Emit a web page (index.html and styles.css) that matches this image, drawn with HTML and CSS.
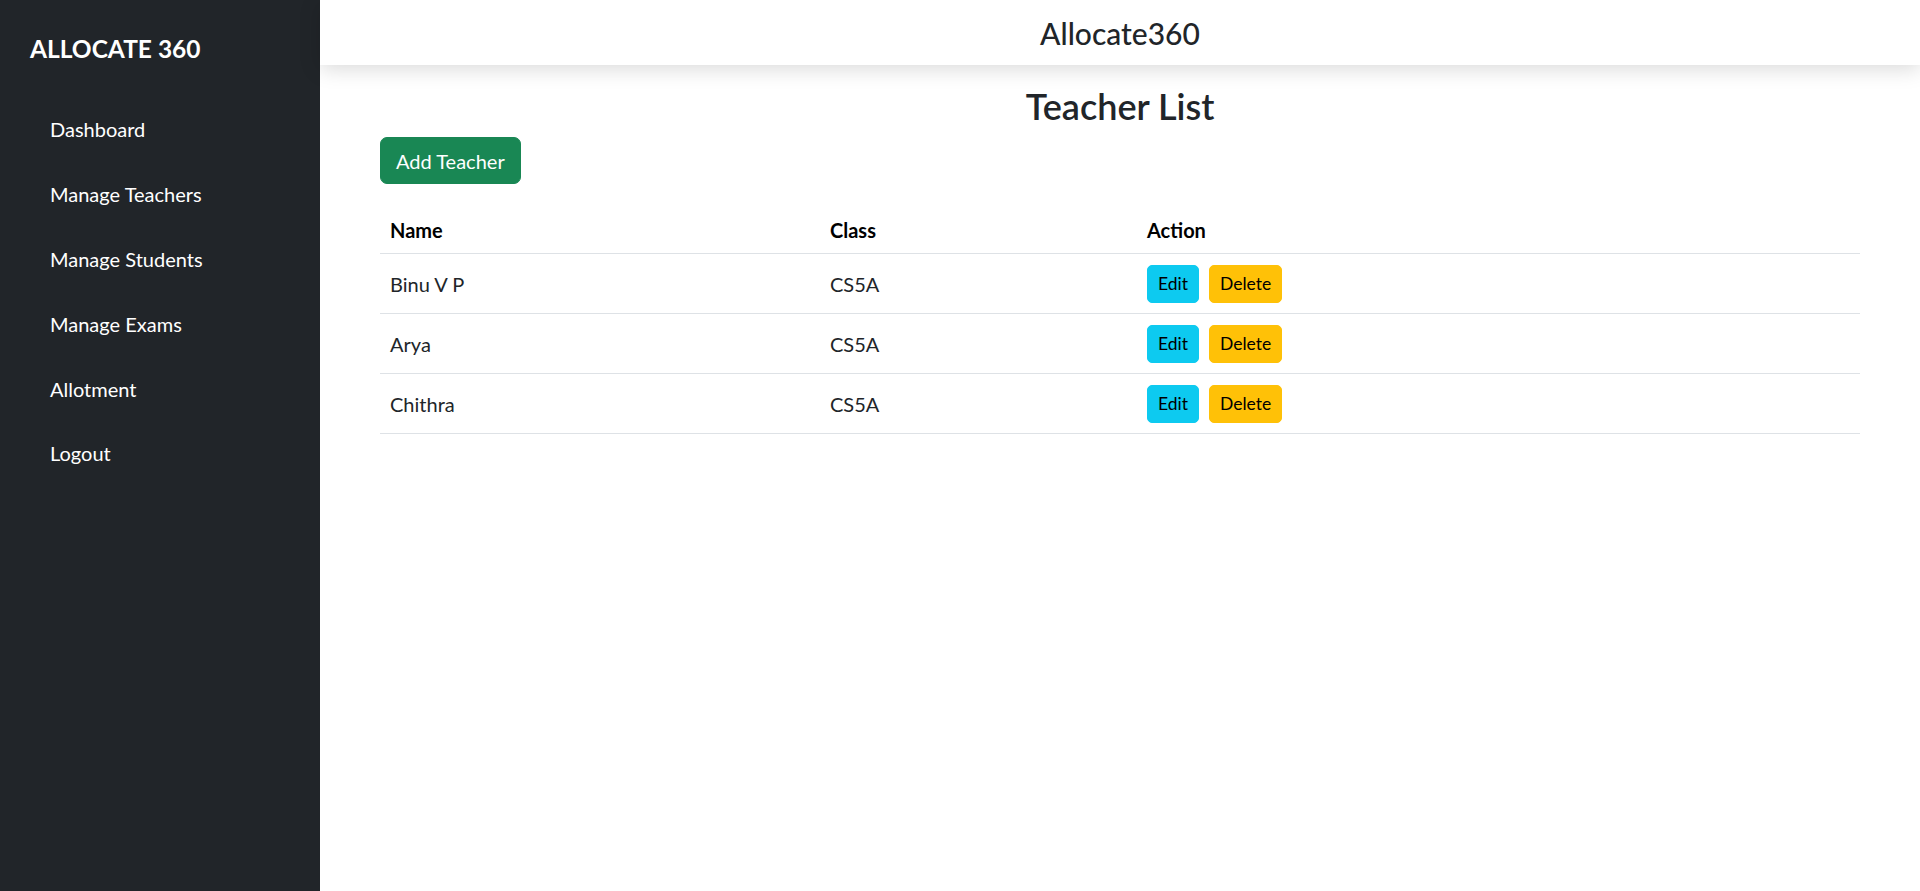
FILE: index.html
```html
<!DOCTYPE html>
<html lang="en">
<head>
<meta charset="utf-8">
<title>Allocate360</title>
<link rel="stylesheet" href="styles.css">
</head>
<body>
<div class="layout">
  <aside class="sidebar">
    <div class="brand">ALLOCATE 360</div>
    <nav class="nav">
      <a class="nav-link" href="#">Dashboard</a>
      <a class="nav-link" href="#">Manage Teachers</a>
      <a class="nav-link" href="#">Manage Students</a>
      <a class="nav-link" href="#">Manage Exams</a>
      <a class="nav-link" href="#">Allotment</a>
      <a class="nav-link" href="#">Logout</a>
    </nav>
  </aside>
  <div class="main">
    <header class="topbar">Allocate360</header>
    <section class="content">
      <h2 class="page-title">Teacher List</h2>
      <button class="btn btn-success">Add Teacher</button>
      <table class="table">
        <colgroup>
          <col class="col-name">
          <col class="col-class">
          <col>
        </colgroup>
        <thead>
          <tr><th>Name</th><th>Class</th><th>Action</th></tr>
        </thead>
        <tbody>
          <tr>
            <td>Binu V P</td><td>CS5A</td>
            <td><div class="actions"><button class="btn-sm btn-info">Edit</button><button class="btn-sm btn-warning">Delete</button></div></td>
          </tr>
          <tr>
            <td>Arya</td><td>CS5A</td>
            <td><div class="actions"><button class="btn-sm btn-info">Edit</button><button class="btn-sm btn-warning">Delete</button></div></td>
          </tr>
          <tr>
            <td>Chithra</td><td>CS5A</td>
            <td><div class="actions"><button class="btn-sm btn-info">Edit</button><button class="btn-sm btn-warning">Delete</button></div></td>
          </tr>
        </tbody>
      </table>
    </section>
  </div>
</div>
</body>
</html>
```
FILE: styles.css
```css
* { box-sizing: border-box; }
html, body { margin: 0; padding: 0; }
body {
  font-family: Lato, "Liberation Sans", Arial, sans-serif;
  font-size: 20px;
  color: #212529;
  background: #fff;
}
.layout {
  display: flex;
  min-height: 891px;
}
.sidebar {
  width: 320px;
  flex: 0 0 320px;
  background: #212529;
  color: #fff;
  padding: 34px 0 0 30px;
}
.brand {
  font-size: 24.5px;
  font-weight: 700;
  line-height: 30px;
  margin-bottom: 33px;
}
.nav {
  display: flex;
  flex-direction: column;
}
.nav-link {
  color: #fff;
  text-decoration: none;
  line-height: 30px;
  padding: 17.4px 20px;
}
.main {
  flex: 1;
  display: flex;
  flex-direction: column;
}
.topbar {
  height: 65px;
  display: flex;
  align-items: center;
  justify-content: center;
  font-size: 30px;
  font-weight: 500;
  color: #212529;
  background: #fff;
  box-shadow: 0 4px 20px rgba(0, 0, 0, 0.15);
  position: relative;
  z-index: 1;
}
.content {
  padding: 17px 60px 0 60px;
}
.page-title {
  margin: 0 0 7px 0;
  text-align: center;
  font-size: 36px;
  line-height: 48px;
  font-weight: 600;
  color: #212529;
}
.btn {
  font-family: inherit;
  font-size: 20px;
  line-height: 30px;
  padding: 7.5px 15px;
  border: 1px solid transparent;
  border-radius: 7px;
  cursor: pointer;
  white-space: nowrap;
}
.btn-success {
  background: #198754;
  border-color: #198754;
  color: #fff;
  height: 47px;
  margin-bottom: 19px;
  display: block;
}
.table {
  width: 100%;
  border-collapse: collapse;
  table-layout: fixed;
  color: #000;
}
.col-name { width: 440px; }
.col-class { width: 317px; }
.table th,
.table td {
  text-align: left;
  padding: 10px;
  border-bottom: 1px solid #dee2e6;
  vertical-align: middle;
  line-height: 30px;
}
.table th { font-weight: 700; padding-top: 12px; padding-bottom: 8px; }
.table td { color: #212529; padding-top: 10.5px; padding-bottom: 10.5px; }
.actions {
  display: flex;
  gap: 10px;
}
.btn-sm {
  font-family: inherit;
  font-size: 17.5px;
  line-height: 26px;
  height: 38px;
  padding: 0 10px;
  border: 1px solid transparent;
  border-radius: 5px;
  color: #000;
  cursor: pointer;
}
.btn-info { background: #0dcaf0; border-color: #0dcaf0; }
.btn-warning { background: #ffc107; border-color: #ffc107; }
```
